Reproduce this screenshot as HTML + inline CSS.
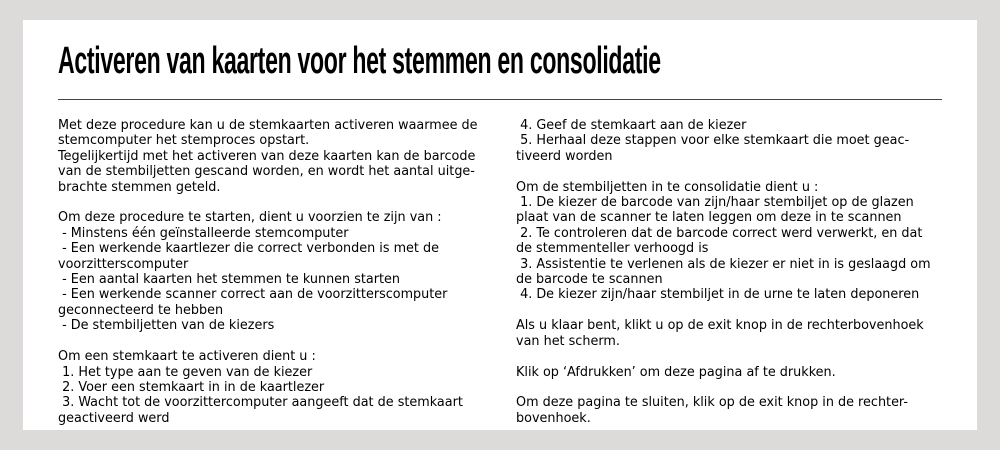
<!DOCTYPE html>
<html><head><meta charset="utf-8"><style>
html,body{margin:0;padding:0;background:#dcdbd9;width:1000px;height:450px;overflow:hidden}
.panel{position:absolute;left:23px;top:20px;width:954px;height:410px;background:#fff}
h1{position:absolute;left:58px;top:40px;margin:0;font:bold 38px "Liberation Sans Narrow","Liberation Sans",sans-serif;transform-origin:0 0;transform:scaleX(0.607);white-space:nowrap;color:#000;letter-spacing:-0.5px}
.rule{position:absolute;left:58px;top:99px;width:884px;height:1px;background:#444}
.col{position:absolute;top:118px;font:13px/15.4px "DejaVu Sans","Liberation Sans",sans-serif;color:#000;white-space:nowrap;transform-origin:0 0;transform:scaleX(0.984)}
</style></head><body>
<div class="panel"></div>
<h1>Activeren van kaarten voor het stemmen en consolidatie</h1>
<div class="rule"></div>
<div class="col" style="left:58px">Met deze procedure kan u de stemkaarten activeren waarmee de<br>stemcomputer het stemproces opstart.<br>Tegelijkertijd met het activeren van deze kaarten kan de barcode<br>van de stembiljetten gescand worden, en wordt het aantal uitge-<br>brachte stemmen geteld.<br><br>Om deze procedure te starten, dient u voorzien te zijn van :<br>&nbsp;- Minstens één geïnstalleerde stemcomputer<br>&nbsp;- Een werkende kaartlezer die correct verbonden is met de<br>voorzitterscomputer<br>&nbsp;- Een aantal kaarten het stemmen te kunnen starten<br>&nbsp;- Een werkende scanner correct aan de voorzitterscomputer<br>geconnecteerd te hebben<br>&nbsp;- De stembiljetten van de kiezers<br><br>Om een stemkaart te activeren dient u :<br>&nbsp;1. Het type aan te geven van de kiezer<br>&nbsp;2. Voer een stemkaart in in de kaartlezer<br>&nbsp;3. Wacht tot de voorzittercomputer aangeeft dat de stemkaart<br>geactiveerd werd</div>
<div class="col" style="left:516px">&nbsp;4. Geef de stemkaart aan de kiezer<br>&nbsp;5. Herhaal deze stappen voor elke stemkaart die moet geac-<br>tiveerd worden<br><br>Om de stembiljetten in te consolidatie dient u :<br>&nbsp;1. De kiezer de barcode van zijn/haar stembiljet op de glazen<br>plaat van de scanner te laten leggen om deze in te scannen<br>&nbsp;2. Te controleren dat de barcode correct werd verwerkt, en dat<br>de stemmenteller verhoogd is<br>&nbsp;3. Assistentie te verlenen als de kiezer er niet in is geslaagd om<br>de barcode te scannen<br>&nbsp;4. De kiezer zijn/haar stembiljet in de urne te laten deponeren<br><br>Als u klaar bent, klikt u op de exit knop in de rechterbovenhoek<br>van het scherm.<br><br>Klik op ‘Afdrukken’ om deze pagina af te drukken.<br><br>Om deze pagina te sluiten, klik op de exit knop in de rechter-<br>bovenhoek.</div>
</body></html>
